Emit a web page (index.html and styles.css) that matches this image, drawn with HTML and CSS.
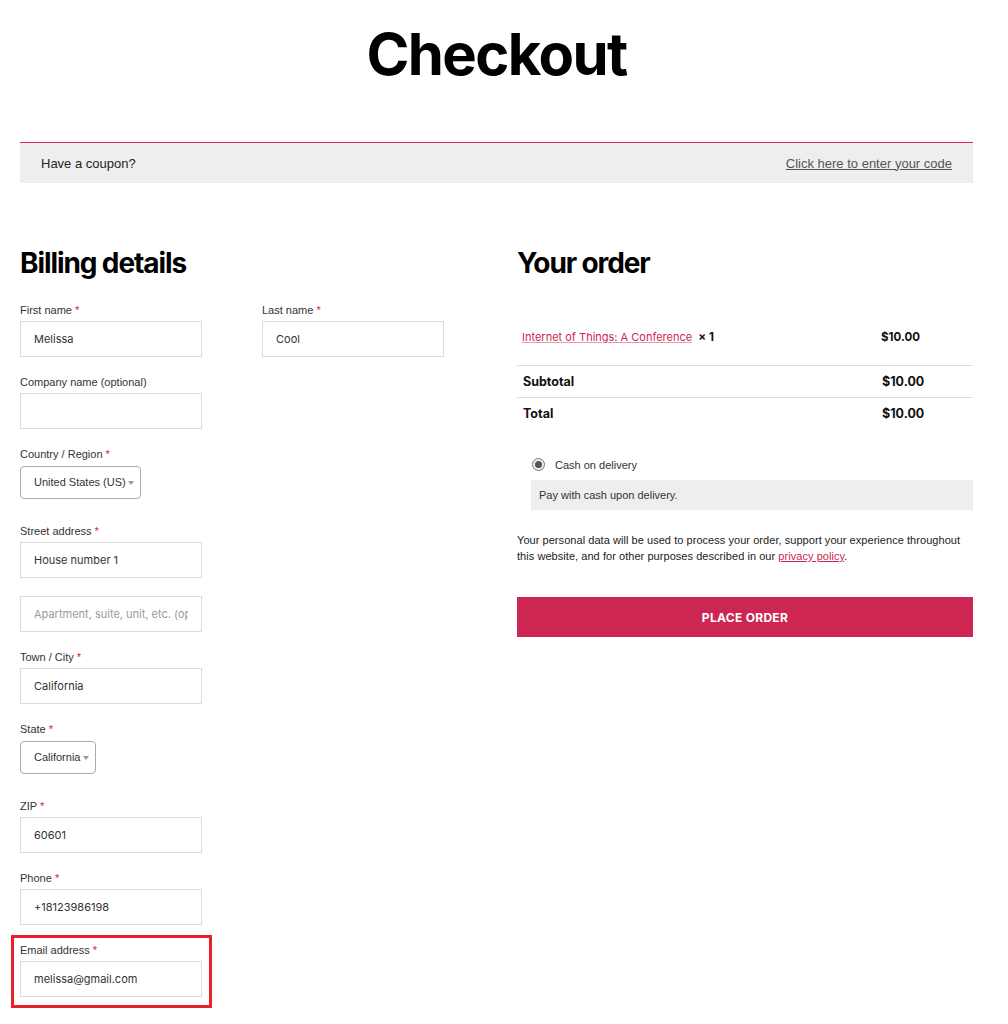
FILE: index.html
```html
<!DOCTYPE html>
<html lang="en">
<head>
<meta charset="utf-8">
<title>Checkout</title>
<link rel="stylesheet" href="styles.css">
</head>
<body>
<div class="page">
  <h1 class="title">Checkout</h1>

  <div class="coupon">
    <span>Have a coupon?</span>
    <a href="#" class="coupon-link">Click here to enter your code</a>
  </div>

  <div class="columns">
    <section class="billing">
      <h2 class="heading">Billing details</h2>

      <div class="row-pair">
        <div class="field">
          <label class="label">First name <span class="req">*</span></label>
          <div class="input"><span class="value">Melissa</span></div>
        </div>
        <div class="field">
          <label class="label">Last name <span class="req">*</span></label>
          <div class="input"><span class="value">Cool</span></div>
        </div>
      </div>

      <div class="field">
        <label class="label">Company name (optional)</label>
        <div class="input"><span class="value"></span></div>
      </div>

      <div class="field field-select">
        <label class="label">Country / Region <span class="req">*</span></label>
        <div class="select select-country">United States (US)<span class="caret"></span></div>
      </div>

      <div class="field field-street">
        <label class="label">Street address <span class="req">*</span></label>
        <div class="input"><span class="value">House number 1</span></div>
        <div class="input input-second"><span class="value placeholder">Apartment, suite, unit, etc. (optional)</span></div>
      </div>

      <div class="field">
        <label class="label">Town / City <span class="req">*</span></label>
        <div class="input"><span class="value">California</span></div>
      </div>

      <div class="field field-select">
        <label class="label">State <span class="req">*</span></label>
        <div class="select select-state">California<span class="caret"></span></div>
      </div>

      <div class="field">
        <label class="label">ZIP <span class="req">*</span></label>
        <div class="input"><span class="value">60601</span></div>
      </div>

      <div class="field">
        <label class="label">Phone <span class="req">*</span></label>
        <div class="input"><span class="value">+18123986198</span></div>
      </div>

      <div class="field field-highlight">
        <label class="label">Email address <span class="req">*</span></label>
        <div class="input"><span class="value">melissa@gmail.com</span></div>
      </div>
    </section>

    <section class="order">
      <h2 class="heading">Your order</h2>

      <div class="order-table">
        <div class="order-row product-row">
          <div class="cell-name"><a href="#" class="product-link">Internet of Things: A Conference</a>&nbsp;&nbsp;<strong class="qty">×&nbsp;1</strong></div>
          <div class="cell-price">$10.00</div>
        </div>
        <div class="order-row total-row">
          <div class="cell-name">Subtotal</div>
          <div class="cell-price">$10.00</div>
        </div>
        <div class="order-row total-row">
          <div class="cell-name">Total</div>
          <div class="cell-price">$10.00</div>
        </div>
      </div>

      <div class="payment">
        <div class="method">
          <span class="radio"><span class="radio-dot"></span></span>
          <span>Cash on delivery</span>
        </div>
        <div class="method-box">Pay with cash upon delivery.</div>
      </div>

      <p class="privacy">Your personal data will be used to process your order, support your experience throughout this website, and for other purposes described in our <a href="#" class="privacy-link">privacy policy</a>.</p>

      <button class="place-order" type="button">PLACE ORDER</button>
    </section>
  </div>
</div>
</body>
</html>
```

FILE: styles.css
```css
* { box-sizing: border-box; }

html, body {
  margin: 0;
  padding: 0;
  background: #fff;
}

body {
  font-family: "Liberation Sans", Arial, sans-serif;
  color: #333;
}

.page {
  width: 953px;
  margin-left: 20px;
  padding-bottom: 40px;
}

.title {
  margin: 19px 0 0;
  font-family: Inter, "Liberation Sans", sans-serif;
  font-weight: 700;
  font-size: 58px;
  line-height: 70px;
  letter-spacing: -1.6px;
  text-align: center;
  color: #000;
}

.coupon {
  margin-top: 53px;
  height: 41px;
  border-top: 1px solid #e2264d;
  background: #eeeeee;
  display: flex;
  align-items: center;
  justify-content: space-between;
  padding: 0 21px;
  font-size: 13px;
  color: #222;
}

.coupon-link {
  color: #555;
  text-decoration: underline;
}

.columns {
  display: grid;
  grid-template-columns: 497px 456px;
  margin-top: 63px;
}

.heading {
  margin: 0;
  font-family: Inter, "Liberation Sans", sans-serif;
  font-weight: 700;
  font-size: 28px;
  line-height: 34px;
  letter-spacing: -1.1px;
  color: #000;
}

.billing .heading {
  margin-bottom: 22px;
}

.row-pair {
  display: flex;
  gap: 60px;
}

.field {
  display: flex;
  flex-direction: column;
  align-items: flex-start;
  width: 182px;
  margin-bottom: 17px;
}

.label {
  display: block;
  font-size: 11px;
  line-height: 16px;
  color: #333;
  margin-bottom: 3px;
  white-space: nowrap;
}

.req {
  color: #c62828;
}

.input {
  width: 182px;
  height: 36px;
  border: 1px solid #dcdcdc;
  background: #fff;
  padding: 1px 13px 0;
  font-family: Inter, "Liberation Sans", sans-serif;
  font-size: 11px;
  line-height: 33px;
  color: #333;
}

.value {
  display: block;
  height: 33px;
  white-space: nowrap;
  overflow: hidden;
}

.input-second {
  margin-top: 18px;
}

.placeholder {
  color: #9a9a9a;
}

.field-select {
  margin-bottom: 24px;
}

.field-select .label {
  margin-bottom: 4px;
}

.select {
  position: relative;
  height: 33px;
  border: 1px solid #aaa;
  border-radius: 4px;
  background: #fff;
  padding: 0 0 0 13px;
  font-family: "Liberation Sans", Arial, sans-serif;
  font-size: 11px;
  line-height: 31px;
  color: #333;
  white-space: nowrap;
}

.select-country { width: 121px; }
.select-state { width: 76px; }

.caret {
  position: absolute;
  right: 6px;
  top: 14px;
  width: 0;
  height: 0;
  border-left: 3px solid transparent;
  border-right: 3px solid transparent;
  border-top: 4px solid #999;
}

.field-highlight {
  position: relative;
}

.field-highlight::after {
  content: "";
  position: absolute;
  left: -9px;
  right: -10px;
  top: -7px;
  bottom: -11px;
  border: 3px solid #e8202a;
  pointer-events: none;
}

/* Order column */

.order .heading {
  margin-bottom: 29px;
}

.order-table {
  font-family: Inter, "Liberation Sans", sans-serif;
  color: #111;
}

.order-row {
  display: grid;
  grid-template-columns: 364px 1fr;
  align-items: center;
}

.product-row {
  height: 56px;
  font-size: 11px;
}

.product-row .cell-name {
  padding-left: 5px;
}

.product-link {
  color: #cd2653;
  text-decoration: underline;
  text-decoration-color: #e59ab0;
}

.qty {
  font-weight: 700;
  font-size: 11.5px;
}

.product-row .cell-price {
  font-weight: 700;
  font-size: 11.5px;
}

.total-row {
  height: 32px;
  border-top: 1px solid #dedede;
  font-size: 12.5px;
  font-weight: 700;
}

.total-row .cell-name {
  padding-left: 6px;
}

.total-row .cell-price {
  padding-left: 1px;
  font-size: 12.5px;
}

.payment {
  margin-top: 20px;
  padding-left: 14px;
}

.method {
  display: flex;
  align-items: center;
  gap: 10px;
  height: 31px;
  padding-left: 1px;
  font-size: 11px;
  color: #333;
}

.radio {
  width: 13px;
  height: 13px;
  border-radius: 50%;
  border: 1px solid #777;
  background: #eee;
  display: flex;
  align-items: center;
  justify-content: center;
}

.radio-dot {
  width: 7px;
  height: 7px;
  border-radius: 50%;
  background: #555;
}

.method-box {
  background: #eeeeee;
  height: 30px;
  padding: 0 8px;
  font-size: 11px;
  line-height: 30px;
  color: #333;
}

.privacy {
  margin: 22px 0 0;
  font-size: 11px;
  line-height: 16px;
  letter-spacing: 0.05px;
  color: #222;
}

.privacy-link {
  color: #cd2653;
  text-decoration: underline;
}

.place-order {
  display: block;
  width: 100%;
  height: 40px;
  margin-top: 33px;
  border: 0;
  background: #cd2653;
  color: #fff;
  font-family: Inter, "Liberation Sans", sans-serif;
  font-weight: 700;
  font-size: 12px;
  letter-spacing: 0.3px;
  cursor: pointer;
}
```
